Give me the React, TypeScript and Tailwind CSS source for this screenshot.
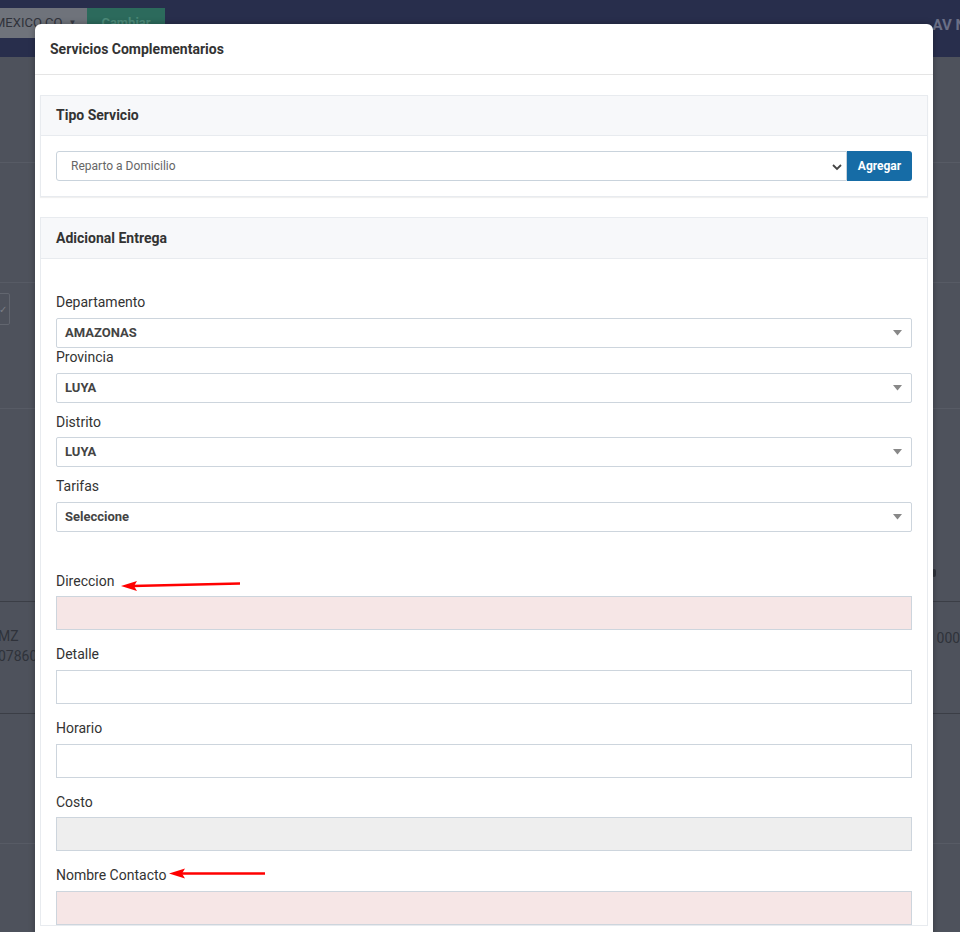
import React from "react";

const Caret = () => (
  <svg width="9" height="6" viewBox="0 0 9 6" className="absolute right-[9px] top-1/2 -translate-y-1/2">
    <path d="M0 0 L9 0 L4.5 5.5 Z" fill="#888" />
  </svg>
);

function Select2({ value }: { value: string }) {
  return (
    <div className="relative h-[30px] border border-[#cdd5dd] rounded-[2px] bg-white flex items-center pl-[8px] text-[13px] font-bold text-[#444]">
      {value}
      <Caret />
    </div>
  );
}

function Label({ children, mb = "mb-[6px]" }: { children: React.ReactNode; mb?: string }) {
  return <div className={`h-[20px] leading-[20px] text-[14px] text-[#333] ${mb}`}>{children}</div>;
}

export default function App() {
  return (
    <div className="relative w-[960px] h-[932px] overflow-hidden bg-[#4e525c]" style={{ fontFamily: "Roboto, 'Open Sans', Arial, sans-serif" }}>
      {/* background page (under overlay) */}
      <div className="h-[57px] bg-[#282e4c] relative">
        <div className="flex pt-[8px]">
          <div className="h-[30px] w-[87px] bg-[#6f737b] flex items-center text-[13px] text-[#2f323a] pl-0 overflow-hidden whitespace-nowrap">
            <span className="-ml-[6px]">MEXICO CO</span>
            <span className="ml-[6px] text-[8px] text-[#3a3d45]">▼</span>
          </div>
          <div className="h-[30px] w-[78px] bg-[#2c6a5c] flex items-center justify-center text-[13px] font-bold text-[#4d8a79]">Cambiar</div>
        </div>
        <div className="absolute right-[-6px] top-[14px] text-[15px] font-bold text-[#6a6f86] whitespace-nowrap">AV N</div>
      </div>
      <div className="flex flex-col">
        <div className="h-[106px] border-b border-[#575b65]" />
        <div className="h-[120px] border-b border-[#575b65] relative">
          <div className="absolute left-[-4px] top-[130px] w-[14px] h-[32px] border border-[#62666f] rounded-[2px] text-[#7a7e86] text-[10px] flex items-center justify-end pr-[2px]">✓</div>
        </div>
        <div className="h-[126px] border-b border-[#575b65]" />
        <div className="h-[193px] border-b border-[#3b3e46] relative">
          <div className="absolute right-[24px] top-[160px] w-[4px] h-[8px] bg-[#2f323a] rounded-full" />
        </div>
        <div className="h-[112px] border-b border-[#3b3e46] relative text-[14px] text-[#2f323a]">
          <div className="absolute left-[-2px] top-[24px] leading-[20px]">MZ<br />07860</div>
          <div className="absolute right-[-8px] top-[26px]">0007</div>
        </div>
        <div className="h-[130px] border-b border-[#575b65]" />
      </div>

      {/* modal */}
      <div className="absolute left-[35px] top-[24px] w-[898px] h-[920px] bg-white rounded-t-[6px] shadow-[0_0_6px_rgba(0,0,0,0.3)]">
        <div className="h-[51px] border-b border-[#e5e5e5] flex items-center pl-[15px] text-[14px] font-bold text-[#333]">
          Servicios Complementarios
        </div>
        <div className="px-[5px] pt-[20px]">
          {/* card 1 */}
          <div className="border border-[#e8ebef] shadow-[0_1px_1px_rgba(0,0,0,0.06)]">
            <div className="h-[40px] bg-[#f7f8fa] border-b border-[#e8ebef] flex items-center pl-[15px] text-[14px] font-bold text-[#333]">
              Tipo Servicio
            </div>
            <div className="px-[15px] pt-[15px] pb-[15px] flex">
              <div className="relative flex-1 h-[30px] border border-[#c9d3dc] rounded-l-[3px] flex items-center pl-[14px] text-[12px] text-[#666]">
                Reparto a Domicilio
                <svg width="10" height="7" viewBox="0 0 10 7" className="absolute right-[4px] top-[12px]">
                  <path d="M1 1 L5 5 L9 1" fill="none" stroke="#444" strokeWidth="1.8" />
                </svg>
              </div>
              <div className="w-[65px] h-[30px] bg-[#166ca6] rounded-r-[3px] flex items-center justify-center text-[12px] font-bold text-white">
                Agregar
              </div>
            </div>
          </div>

          {/* card 2 */}
          <div className="mt-[20px] border border-[#e8ebef]">
            <div className="h-[41px] bg-[#f7f8fa] border-b border-[#e8ebef] flex items-center pl-[15px] text-[14px] font-bold text-[#333]">
              Adicional Entrega
            </div>
            <div className="px-[15px] pt-[33px]">
              <Label>Departamento</Label>
              <Select2 value="AMAZONAS" />
              <div className="-mt-[1px]">
                <Label mb="mb-[6px]">Provincia</Label>
                <Select2 value="LUYA" />
              </div>
              <div className="mt-[9px]">
                <Label mb="mb-[5px]">Distrito</Label>
                <Select2 value="LUYA" />
              </div>
              <div className="mt-[9px]">
                <Label>Tarifas</Label>
                <Select2 value="Seleccione" />
              </div>
              <div className="mt-[39px]">
                <Label mb="mb-[5px]">Direccion</Label>
                <div className="h-[34px] border border-[#cdd5dd] bg-[#f6e6e6]" />
              </div>
              <div className="mt-[14px]">
                <Label>Detalle</Label>
                <div className="h-[34px] border border-[#cdd5dd] bg-white" />
              </div>
              <div className="mt-[14px]">
                <Label>Horario</Label>
                <div className="h-[34px] border border-[#cdd5dd] bg-white" />
              </div>
              <div className="mt-[14px]">
                <Label mb="mb-[5px]">Costo</Label>
                <div className="h-[34px] border border-[#cdd5dd] bg-[#eeeeee]" />
              </div>
              <div className="mt-[14px]">
                <Label>Nombre Contacto</Label>
                <div className="h-[34px] border border-[#cdd5dd] bg-[#f6e6e6]" />
              </div>
            </div>
          </div>
        </div>
      </div>

      {/* annotation arrows */}
      <svg className="absolute left-0 top-0 pointer-events-none" width="960" height="932">
        <line x1="240" y1="583.5" x2="132" y2="586" stroke="#f00" strokeWidth="2.5" />
        <path d="M121 586 L137 581 L134 586 L137 591 Z" fill="#f00" />
        <line x1="265" y1="873.5" x2="180" y2="873.5" stroke="#f00" strokeWidth="2.5" />
        <path d="M169 873.5 L185 868.5 L182 873.5 L185 878.5 Z" fill="#f00" />
      </svg>
    </div>
  );
}
